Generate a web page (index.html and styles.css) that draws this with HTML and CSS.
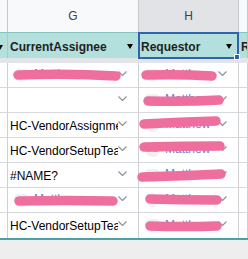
FILE: index.html
```html
<!DOCTYPE html>
<html lang="en">

<head>
    <meta charset="UTF-8">
    <title>Sheet - filter view</title>
    <link rel="stylesheet" href="styles.css">
</head>

<body>
    <div class="sheet">
        <div class="row head">
            <div class="cell"></div>
            <div class="cell">G</div>
            <div class="cell picked">H</div>
            <div class="cell"></div>
        </div>
        <div class="row filter">
            <div class="cell edge"><span class="tri"></span></div>
            <div class="cell"><span>CurrentAssignee</span><span class="tri"></span></div>
            <div class="cell active"><span>Requestor</span><span class="tri"></span><span class="handle"></span></div>
            <div class="cell"><span>R</span></div>
        </div>
        <div class="freeze"></div>

        <div class="row data">
            <div class="cell"></div>
            <div class="cell drop"><span class="txt"><span class="chip"><span class="ava">ME</span><span class="name">Matthew</span></span></span><svg class="chev" viewBox="0 0 9 5"><polyline points="0.5,0.5 4.5,4.5 8.5,0.5"/></svg></div>
            <div class="cell drop"><span class="txt"><span class="chip"><span class="ava">ME</span><span class="name">Matthew</span></span></span><svg class="chev" viewBox="0 0 9 5"><polyline points="0.5,0.5 4.5,4.5 8.5,0.5"/></svg></div>
            <div class="cell"></div>
        </div>
        <div class="row data">
            <div class="cell"></div>
            <div class="cell drop"><span class="txt"></span><svg class="chev" viewBox="0 0 9 5"><polyline points="0.5,0.5 4.5,4.5 8.5,0.5"/></svg></div>
            <div class="cell drop"><span class="txt"><span class="chip"><span class="ava">ME</span><span class="name">Matthew</span></span></span><svg class="chev" viewBox="0 0 9 5"><polyline points="0.5,0.5 4.5,4.5 8.5,0.5"/></svg></div>
            <div class="cell"></div>
        </div>
        <div class="row data">
            <div class="cell"></div>
            <div class="cell drop"><span class="txt">HC-VendorAssignment</span><svg class="chev" viewBox="0 0 9 5"><polyline points="0.5,0.5 4.5,4.5 8.5,0.5"/></svg></div>
            <div class="cell drop"><span class="txt"><span class="chip"><span class="ava">ME</span><span class="name">Matthew</span></span></span><svg class="chev" viewBox="0 0 9 5"><polyline points="0.5,0.5 4.5,4.5 8.5,0.5"/></svg></div>
            <div class="cell"></div>
        </div>
        <div class="row data">
            <div class="cell"></div>
            <div class="cell drop"><span class="txt">HC-VendorSetupTeam</span><svg class="chev" viewBox="0 0 9 5"><polyline points="0.5,0.5 4.5,4.5 8.5,0.5"/></svg></div>
            <div class="cell drop"><span class="txt"><span class="chip"><span class="ava">ME</span><span class="name">Matthew</span></span></span><svg class="chev" viewBox="0 0 9 5"><polyline points="0.5,0.5 4.5,4.5 8.5,0.5"/></svg></div>
            <div class="cell"></div>
        </div>
        <div class="row data">
            <div class="cell"></div>
            <div class="cell drop"><span class="txt">#NAME?</span><svg class="chev" viewBox="0 0 9 5"><polyline points="0.5,0.5 4.5,4.5 8.5,0.5"/></svg></div>
            <div class="cell drop"><span class="txt"><span class="chip"><span class="ava">ME</span><span class="name">Matthew</span></span></span><svg class="chev" viewBox="0 0 9 5"><polyline points="0.5,0.5 4.5,4.5 8.5,0.5"/></svg></div>
            <div class="cell"></div>
        </div>
        <div class="row data">
            <div class="cell"></div>
            <div class="cell drop"><span class="txt"><span class="chip"><span class="ava">ME</span><span class="name">Matthew</span></span></span><svg class="chev" viewBox="0 0 9 5"><polyline points="0.5,0.5 4.5,4.5 8.5,0.5"/></svg></div>
            <div class="cell drop"><span class="txt"><span class="chip"><span class="ava">ME</span><span class="name">Matthew</span></span></span><svg class="chev" viewBox="0 0 9 5"><polyline points="0.5,0.5 4.5,4.5 8.5,0.5"/></svg></div>
            <div class="cell"></div>
        </div>
        <div class="row data last">
            <div class="cell"></div>
            <div class="cell drop"><span class="txt">HC-VendorSetupTeam</span><svg class="chev" viewBox="0 0 9 5"><polyline points="0.5,0.5 4.5,4.5 8.5,0.5"/></svg></div>
            <div class="cell drop"><span class="txt"><span class="chip"><span class="ava">ME</span><span class="name">Matthew</span></span></span><svg class="chev" viewBox="0 0 9 5"><polyline points="0.5,0.5 4.5,4.5 8.5,0.5"/></svg></div>
            <div class="cell"></div>
        </div>
    </div>

    <!-- redaction marks drawn over the names -->
    <svg class="redact" viewBox="0 0 248 259">
        <path d="M18 75 Q70 73 116 76"/>
        <path d="M146 75 Q180 74 212 76"/>
        <path d="M148 101 Q185 102 219 100"/>
        <path d="M144 124 Q180 122 216 121"/>
        <path d="M144 147 Q182 146 220 146"/>
        <path d="M142 177 Q182 176 221 174"/>
        <path d="M19 201 Q66 200 113 201"/>
        <path d="M150 199 Q183 200 217 200"/>
        <path d="M150 226 Q183 227 217 226"/>
    </svg>
</body>

</html>
```

FILE: styles.css
```css
* {
    box-sizing: border-box;
    margin: 0;
    padding: 0;
}

body {
    font-family: "Liberation Sans", Arial, sans-serif;
    font-size: 12px;
    background-color: #eeeeee;
    position: relative;
    overflow: hidden;
}

.sheet {
    background: white;
    border-bottom: 2px solid #4aa2a6;
}

.row {
    display: grid;
    grid-template-columns: 8px 131px 100px 1fr;
}

.cell {
    display: flex;
    align-items: center;
    border-right: 1px solid #cdd0d5;
    overflow: hidden;
    white-space: nowrap;
    position: relative;
}

.head .cell {
    height: 32px;
    justify-content: center;
    background: #f8f9fa;
    color: #3c4043;
    border-right-color: #c6c9cc;
}

.head .cell.picked {
    background: #e1e3e6;
}

.filter .cell {
    height: 26px;
    padding: 3px 0 0 2px;
    background: #b3e0dc;
    border-top: 1px solid #86c4be;
    border-right-color: #9ccfca;
    font-weight: bold;
    color: #1f1f1f;
    justify-content: space-between;
}

.filter .cell.edge {
    padding-left: 0;
}

.filter .edge .tri {
    margin: 0 0 0 -3px;
}

.tri {
    width: 0;
    height: 0;
    border-left: 3.5px solid transparent;
    border-right: 3.5px solid transparent;
    border-top: 5px solid #000;
    margin-right: 5px;
    margin-top: -2px;
}

.filter .active {
    overflow: visible;
    z-index: 2;
}

.filter .active .tri {
    margin-right: 6px;
}

.filter .active::after {
    content: "";
    position: absolute;
    top: -1px;
    left: -1px;
    right: -1px;
    bottom: -1px;
    border: 2px solid #2f63ad;
}

.handle {
    position: absolute;
    right: -2px;
    bottom: -2px;
    width: 6px;
    height: 6px;
    background: #2f63ad;
    border: 1px solid white;
    z-index: 3;
}

.freeze {
    height: 5px;
    background: #e2e4e7;
}

.data .cell {
    height: 25px;
    border-bottom: 1px solid #d6d9dd;
    color: #000;
}

.data.last .cell {
    border-bottom: none;
    height: 25px;
}

.drop {
    padding-left: 2px;
}

.drop .txt {
    flex: 1;
    overflow: hidden;
    white-space: nowrap;
    padding-top: 1px;
}

.chev {
    width: 9px;
    height: 5px;
    margin: -4px 11px 0 0;
    flex-shrink: 0;
}

.chev polyline {
    fill: none;
    stroke: #909398;
    stroke-width: 1.2;
}

.chip {
    display: flex;
    align-items: center;
    gap: 5px;
    padding-left: 4px;
    margin-top: -3px;
}

.ava {
    width: 15px;
    height: 15px;
    border-radius: 50%;
    background: #eef0f2;
    color: #80868b;
    font-size: 8px;
    display: flex;
    align-items: center;
    justify-content: center;
}

.name {
    color: #5a86d6;
}

.redact {
    position: absolute;
    top: 0;
    left: 0;
    width: 248px;
    height: 259px;
    pointer-events: none;
}

.redact path {
    fill: none;
    stroke: #ee6f9d;
    stroke-width: 9.5;
    stroke-linecap: round;
}
```
